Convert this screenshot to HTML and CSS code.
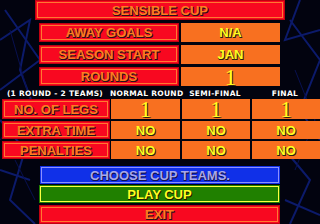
FILE: index.html
```html
<!DOCTYPE html>
<html>
<head>
<meta charset="utf-8">
<link rel="stylesheet" href="styles.css">
</head>
<body>
<svg class="bg" width="320" height="224" viewBox="0 0 320 224">
  <g fill="none" stroke="#0c1a6a" stroke-width="2">
    <path d="M0 40 L30 20 L20 70 L35 110"/>
    <path d="M0 120 L25 150 L10 200 L35 224"/>
    <path d="M5 10 L40 60 L0 90"/>
    <path d="M290 20 L320 60 L300 110 L320 140"/>
    <path d="M285 150 L310 180 L290 224"/>
    <path d="M300 0 L285 40 L320 30"/>
    <path d="M0 170 L30 180"/>
    <path d="M285 200 L320 215"/>
  </g>
  <g fill="none" stroke="#081050" stroke-width="1">
    <path d="M10 30 L30 100 L0 140"/>
    <path d="M295 70 L315 120 L295 170"/>
    <path d="M15 160 L35 200"/>
  </g>
</svg>
<div class="screen">
  <div class="box red title"><span class="lbl">SENSIBLE CUP</span></div>
  <div class="pairs">
    <div class="pair">
      <div class="box red plabel"><span class="lbl">AWAY GOALS</span></div>
      <div class="val pval"><span class="yel">N/A</span></div>
    </div>
    <div class="pair">
      <div class="box red plabel"><span class="lbl">SEASON START</span></div>
      <div class="val pval"><span class="yel">JAN</span></div>
    </div>
    <div class="pair">
      <div class="box red plabel"><span class="lbl">ROUNDS</span></div>
      <div class="val pval"><span class="one">1</span></div>
    </div>
  </div>
  <div class="thead">
    <div class="hc hlabel">(1 ROUND - 2 TEAMS)</div>
    <div class="hc hcol1">NORMAL ROUND</div>
    <div class="hc hcol">SEMI-FINAL</div>
    <div class="hc hcol">FINAL</div>
  </div>
  <div class="table">
    <div class="trow tall">
      <div class="box red tlabel"><span class="lbl">NO. OF LEGS</span></div>
      <div class="val cell c1"><span class="one">1</span></div>
      <div class="val cell"><span class="one">1</span></div>
      <div class="val cell"><span class="one">1</span></div>
    </div>
    <div class="trow">
      <div class="box red tlabel"><span class="lbl">EXTRA TIME</span></div>
      <div class="val cell c1"><span class="yel">NO</span></div>
      <div class="val cell"><span class="yel">NO</span></div>
      <div class="val cell"><span class="yel">NO</span></div>
    </div>
    <div class="trow">
      <div class="box red tlabel"><span class="lbl">PENALTIES</span></div>
      <div class="val cell c1"><span class="yel">NO</span></div>
      <div class="val cell"><span class="yel">NO</span></div>
      <div class="val cell"><span class="yel">NO</span></div>
    </div>
  </div>
  <div class="buttons">
    <div class="box blue btn b1"><span class="btxt">CHOOSE CUP TEAMS.</span></div>
    <div class="box green btn b2"><span class="gtxt">PLAY CUP</span></div>
    <div class="box red btn b3"><span class="lbl">EXIT</span></div>
  </div>
</div>
</body>
</html>
```

FILE: styles.css
```css
html, body {
  margin: 0;
  padding: 0;
}
body {
  width: 320px;
  height: 224px;
  overflow: hidden;
  background: #02030f;
  position: relative;
  font-family: "Liberation Sans", Arial, sans-serif;
  font-weight: bold;
}
.bg {
  position: absolute;
  left: 0;
  top: 0;
}
.screen {
  position: relative;
  display: flex;
  flex-direction: column;
  width: 320px;
  height: 224px;
}
.box {
  display: flex;
  align-items: center;
  justify-content: center;
  box-sizing: border-box;
}
.red {
  background: #f80820;
  box-shadow: inset 0 0 0 1px #c00010, inset 0 0 0 2px #f80820, inset 0 0 0 3px #ff7830;
}
.blue {
  background: #1030e8;
  box-shadow: inset 0 0 0 1px #1030e8, inset 0 0 0 2px #8c90ff;
}
.green {
  background: #208000;
  box-shadow: inset 0 0 0 1px #208000, inset 0 0 0 2px #ffff40;
}
.lbl {
  color: #ff7c20;
  font-size: 13px;
  text-shadow: 1px 1px 0 #281018, 0 1px 0 #281018;
}
.yel {
  color: #ffff20;
  font-size: 13px;
  text-shadow: 1px 1px 0 #302010, 0 1px 0 #302010;
}
.btxt {
  color: #a8a8e8;
  font-size: 13px;
  text-shadow: 1px 1px 0 #101050, 0 1px 0 #101050;
}
.gtxt {
  color: #ffff20;
  font-size: 13px;
  text-shadow: 1px 1px 0 #202000, 0 1px 0 #202000;
}
.one {
  font-family: "Liberation Serif", "Times New Roman", serif;
  font-weight: normal;
  color: #ffff20;
  font-size: 23px;
  line-height: 18px;
  text-shadow: 1px 1px 0 #302010;
  position: relative;
  top: 1px;
}
.title {
  margin-left: 35px;
  width: 250px;
  height: 21px;
}
.pairs {
  display: flex;
  flex-direction: column;
  gap: 3px;
  margin-top: 3px;
  margin-left: 39px;
}
.pair {
  display: flex;
  gap: 2px;
  height: 19px;
}
.plabel {
  width: 140px;
}
.val {
  background: #f87020;
  display: flex;
  align-items: center;
  justify-content: center;
}
.pval {
  width: 99px;
}
.thead {
  display: flex;
  height: 12px;
  margin-top: 1px;
  align-items: center;
  color: #ffffff;
  font-family: "DejaVu Sans", sans-serif;
  font-size: 7.5px;
  font-weight: bold;
  letter-spacing: 0.3px;
  text-shadow: 1px 1px 0 #000;
}
.hc {
  text-align: center;
  white-space: nowrap;
}
.hlabel {
  width: 110px;
}
.hcol1 {
  width: 70px;
}
.hcol {
  width: 70px;
}
.table {
  display: flex;
  flex-direction: column;
  gap: 2px;
}
.trow {
  display: flex;
  height: 18px;
}
.trow.tall {
  height: 20px;
}
.tlabel {
  width: 108px;
  margin-left: 2px;
}
.cell {
  width: 68px;
  margin-left: 2px;
}
.cell.c1 {
  width: 69px;
  margin-left: 1px;
}
.buttons {
  display: flex;
  flex-direction: column;
  margin-top: 7px;
  margin-left: 40px;
}
.btn {
  width: 240px;
}
.b1 {
  height: 18px;
}
.b2 {
  height: 18px;
  margin-top: 1px;
  margin-left: -1px;
  width: 241px;
}
.b3 {
  height: 19px;
  margin-top: 2px;
  margin-left: -1px;
  width: 241px;
}
```
